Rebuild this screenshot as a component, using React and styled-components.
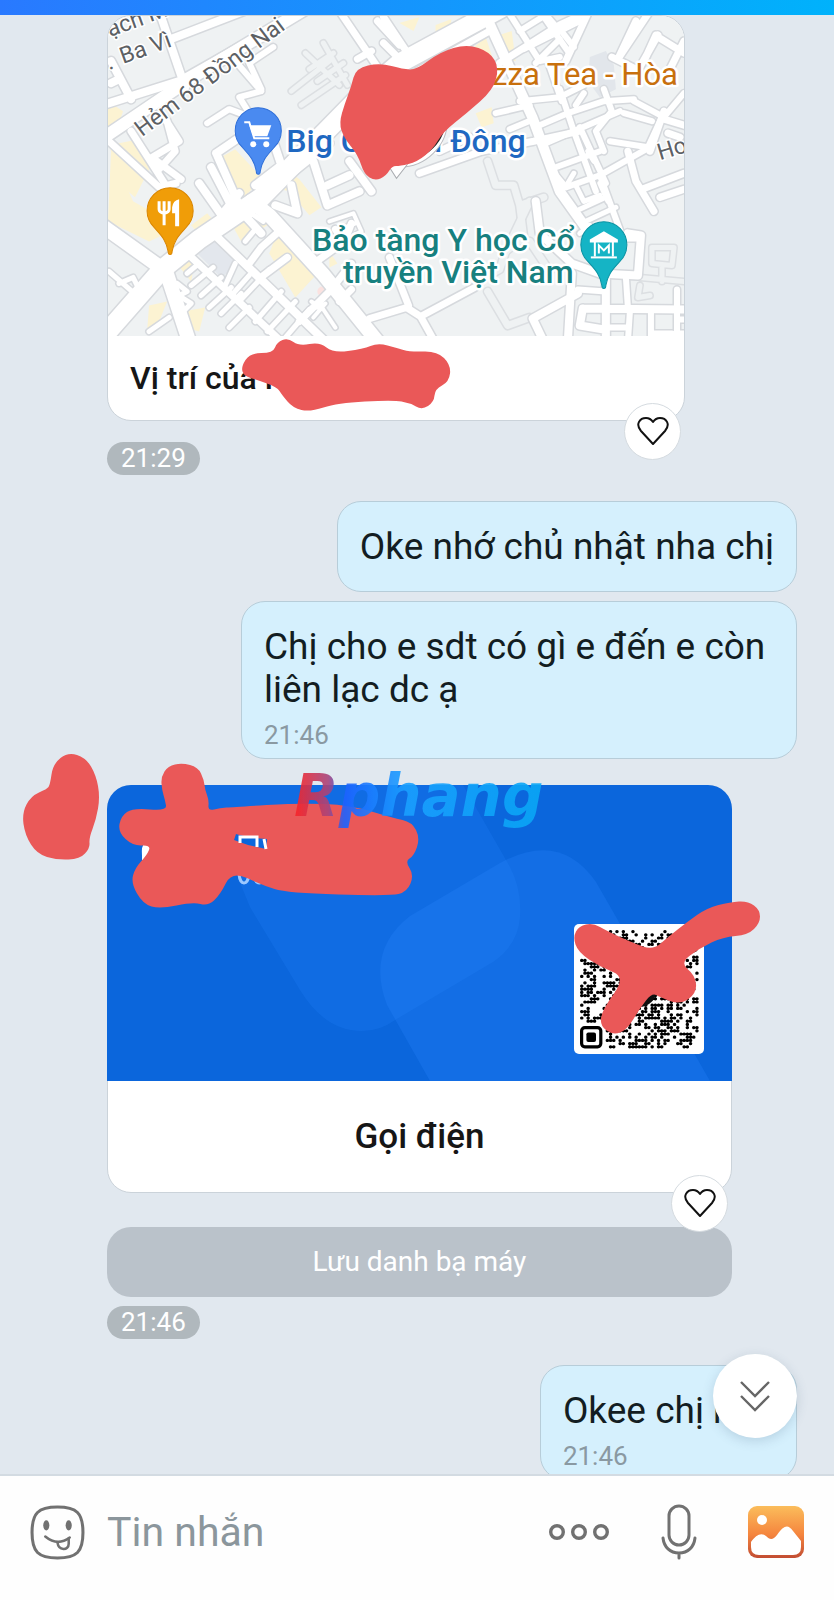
import React from 'react';
import styled, { createGlobalStyle } from 'styled-components';

// Closed blob through the midpoints of a list of points
const blob = (points) => {
  const p = points.split(' ').map((s) => s.split(',').map(Number));
  const mid = (a, b) => `${(a[0] + b[0]) / 2} ${(a[1] + b[1]) / 2}`;
  const start = mid(p[p.length - 1], p[0]);
  const curves = p.map((pt, i) => `Q${pt[0]} ${pt[1]} ${mid(pt, p[(i + 1) % p.length])}`);
  return `M${start} ${curves.join(' ')}Z`;
};

const Scribble = ({ points }) => <path d={blob(points)} fill="#ea5858" />;

const roads = [
  { w: 20, d: 'M100 340L163 268L200 238L262 196L356 100L400 62L500 8' },
  { w: 15, d: 'M100 222L167 270L190 340' },
  { w: 15, d: 'M252 200L270 214L323 272L378 340' },
  { w: 13, d: 'M104 137L200 72L306 8' },
  { w: 9, d: 'M104 104L180 80L300 12M160 10L186 86M250 8L172 38M112 60L132 98M120 78L112 82' },
  { w: 8, d: 'M110 140L160 186L177 182M132 130L168 186M150 158L180 140L166 118M168 120L176 150L160 168M158 160L182 178' },
  { w: 7, d: 'M236 60L262 90L240 96L250 112M262 88L250 62L274 46M208 122L230 108L246 114' },
  { w: 9, d: 'M217 152L258 124M217 152L240 204M200 182L224 216M212 166L234 208M256 184L282 164L274 140L262 148' },
  { w: 9, d: 'M262 196L330 142M314 160L328 204L360 190M328 184L350 174M350 160L372 190' },
  { w: 8, d: 'M340 10L378 66M378 20L400 44M384 16L408 52M358 58L372 50M384 42L404 62' },
  { w: 9, d: 'M210 228L326 340M238 206L262 232M222 214L240 192M276 204L298 212L292 184' },
  { w: 8, d: 'M186 250L282 340M250 262L262 246L282 228M264 274L288 256M300 320L332 288L352 262' },
  { w: 6, d: 'M232 222L252 212L264 220M246 240L256 228M262 210L274 222M188 272L200 262M192 284L214 266M202 294L222 276M210 306L232 286M222 312L242 292M230 326L250 306' },
  { w: 6, d: 'M226 284L236 262M234 292L250 274M256 320L282 290M268 330L296 300M286 336L310 308M240 300L270 268' },
  { w: 6, d: 'M176 292L192 302L184 310M176 296L188 290L178 282M150 330L170 316M110 270L140 296M120 282L134 276L140 288' },
  { w: 8, d: 'M320 258L345 240L352 222M345 240L336 228M340 300L352 288M370 317L407 306L421 315L475 286M390 256L409 304M421 315L435 340' },
  { w: 5, d: 'M312 300L324 308L336 326M314 316L326 302L318 306M330 220L354 212L362 230L344 240M336 230L356 222' },
  { w: 11, d: 'M484 10L533 117L560 190L590 232' },
  { w: 8, d: 'M420 172L482 150L534 140L580 130M440 150L470 136M400 80L490 30M500 62L560 24L590 10' },
  { w: 7, d: 'M508 10L540 60L560 56M520 30L546 14M540 10L568 50M524 48L580 20M536 62L560 38M548 16L560 30M560 28L574 46' },
  { w: 8, d: 'M590 8L566 60M620 55L650 10M612 56L640 70M636 20L618 58M658 34L640 66M656 34L646 56M658 36L684 52M684 40L668 72' },
  { w: 7, d: 'M520 100L560 96L584 84M496 112L530 104M540 124L568 112L604 100L634 98M546 142L620 110M556 166L600 150M510 128L534 118' },
  { w: 7, d: 'M560 88L574 130L596 190M548 60L562 100M584 92L576 104M604 88L612 110L596 130L604 150M580 126L606 182' },
  { w: 7, d: 'M566 186L600 174L650 146M600 174L622 234M556 174L566 186M634 100L664 116L684 92M624 112L652 120M610 140L648 146L660 120' },
  { w: 8, d: 'M628 150L636 180L654 210M642 188L684 172M660 196L684 188M664 110L650 150M664 118L684 124M668 132L680 136' },
  { w: 6, d: 'M576 184L584 200L600 194M580 208L606 196M586 220L616 206M600 182L608 200M594 160L588 150M568 182L574 172M590 224L580 232' },
  { w: 9, d: 'M536 200L540 232L572 262L600 272L638 274L641 234L628 232M610 236L638 236' },
  { w: 9, d: 'M606 270L606 340M572 272L568 340M533 317L578 292M533 317L544 340M583 307L684 308M583 307L580 324L604 328' },
  { w: 7, d: 'M578 288L606 290M626 276L628 306M630 310L628 340M651 310L651 340M677 288L677 340M677 318L690 318M677 332L690 332M608 326L628 326M652 332L672 332' },
];

// Footpaths: same colour as the ground, only their edges show
const lanes = [
  { w: 8, d: 'M488 160L496 184L514 184L520 204L544 196M520 204L524 236L506 250' },
  { w: 8, d: 'M488 290L508 324L530 316M478 280L500 268L506 250L530 200M530 240L550 270' },
  { w: 6, d: 'M292 90L330 60M302 104L346 74M306 52L340 84M324 42L348 84M310 68L334 52M318 80L344 62' },
  { w: 6, d: 'M652 246L674 246L672 264L652 262ZM662 264L662 280M640 276L684 280M640 284L638 296L650 294' },
];

const parks = [
  '109,100 124,110 118,128 109,132', '110,144 140,138 150,168 136,196 124,186', '112,150 134,200 180,226 150,240 109,220',
  '218,158 236,148 262,176 244,198', '330,116 350,100 348,118 322,134', '262,184 282,164 300,178 322,206 310,214 290,190',
  '232,222 262,204 274,220 256,232 242,240', '276,236 290,226 318,272 296,296 270,252', '192,224 208,212 222,228 204,238',
  '176,260 196,258 192,280', '184,310 206,306 200,330 186,326', '150,304 168,300 160,320 148,330',
  '408,54 430,34 438,46 424,66', '436,24 452,18 448,38 436,44', '470,50 486,36 494,60 486,80', '500,34 512,30 516,60 506,60',
  '476,112 492,106 494,122 482,126', '400,22 420,16 414,30', '330,250 338,262 330,266',
];

const Pin = ({ x, y, fill, edge, children }) => (
  <g transform={`translate(${x} ${y})`}>
    <path
      d="M0 43C-1 43-2 42-2 40C-4 28-10 23-16 16A23 23 0 1 1 16 16C10 23 4 28 2 40C2 42 1 43 0 43Z"
      fill={fill} stroke={edge} strokeWidth="1"
    />
    {children}
  </g>
);

const CityMap = () => (
  <MapSvg viewBox="109 15 575 319" role="img" aria-label="Bản đồ">
    <rect x="109" y="15" width="575" height="320" fill="#eff2f3" />
    <path d="M196 250L222 232L240 262L222 276Z" fill="#e3e7ed" />
    <path d="M590 56L606 50L614 64L616 88L600 96L588 80Z" fill="#e2e6eb" />
    {parks.map((p) => <polygon key={p} points={p} fill="#fcf3d2" />)}
    <circle cx="323" cy="290" r="5" fill="#fbe2e0" />
    <g fill="none" strokeLinecap="round" strokeLinejoin="round">
      {lanes.map(({ w, d }) => <path key={d} d={d} stroke="#dcdfe2" strokeWidth={w + 2} />)}
      {lanes.map(({ w, d }) => <path key={d} d={d} stroke="#eff2f3" strokeWidth={w - 1} />)}
      {roads.map(({ w, d }) => <path key={d} d={d} stroke="#d6d9dd" strokeWidth={w + 2} />)}
      {roads.map(({ w, d }) => <path key={d} d={d} stroke="#fff" strokeWidth={w - 1} />)}
    </g>
    <Street transform="translate(143 136) rotate(-37)">Hẻm 68 Đồng Nai</Street>
    <Street transform="translate(124 63) rotate(-20)">Ba Vì</Street>
    <Street transform="translate(111 36) rotate(-20)">ạch M</Street>
    <Street transform="translate(110 69) rotate(-19)">.</Street>
    <Street transform="translate(660 159) rotate(-17)">Ho</Street>
    <Place x="287" y="151" fill="#1f68c1">Big C</Place>
    <Place x="526" y="151" fill="#1f68c1" textAnchor="end">i Đông</Place>
    <Place x="678" y="84" fill="#c8700d" textAnchor="end" $light>zza Tea - Hòa</Place>
    <Place x="575" y="250" fill="#17807f" textAnchor="end">Bảo tàng Y học Cổ</Place>
    <Place x="574" y="282" fill="#17807f" textAnchor="end">truyền Việt Nam</Place>

    <circle cx="400" cy="118" r="48" fill="#fff" stroke="#b9bcc0" />
    <path d="M388 163L397 177L408 163" fill="#fff" stroke="#a9acb0" />
    <circle cx="402" cy="115" r="45" fill="#222" />

    <Pin x={259} y={130} fill="#4a8af0" edge="#2f6fd8">
      <path d="M-14 -9H-9L-4 7H11" fill="none" stroke="#fff" strokeWidth="2" />
      <path d="M-9 -6H13L9 5H-5Z" fill="#fff" />
      <circle cx="-5" cy="13" r="3" fill="#fff" />
      <circle cx="8" cy="13" r="3" fill="#fff" />
    </Pin>
    <Pin x={171} y={210} fill="#f09d08" edge="#d98500">
      <path d="M-11 -10V-2Q-11 1 -6 2Q-1 1 -1 -2V-10M-6 -10V14" fill="none" stroke="#fff" strokeWidth="3" />
      <path d="M9 -12V15H5V2H2V-4Q3 -11 9 -12Z" fill="#fff" />
    </Pin>
    <Pin x={604} y={244} fill="#15b4c5" edge="#0b93a3">
      <path d="M-14 -6L0 -14L14 -6V-3H-14Z" fill="#fff" />
      <path d="M-9 -4V11M9 -4V11" stroke="#fff" strokeWidth="2" />
      <path d="M-13 12H13" stroke="#fff" strokeWidth="2" />
      <path d="M-5 8V0L0 5L5 0V8" fill="none" stroke="#fff" strokeWidth="2" />
    </Pin>
  </MapSvg>
);

// Dots of the contact code, from a small seeded generator
const QR_SIZE = 37;
const qrDots = () => {
  let seed = 20;
  let d = '';
  for (let y = 0; y < QR_SIZE; y += 1) {
    for (let x = 0; x < QR_SIZE; x += 1) {
      seed = (seed * 16807) % 2147483647;
      const finder = (x < 8 && (y < 8 || y > 28)) || (x > 28 && y < 8);
      if (!finder && seed % 100 < 44) d += `M${x + 0.5} ${y + 0.5}h0.1`;
    }
  }
  return d;
};

const QrCode = () => (
  <g transform="translate(574 924)">
    <rect width="130" height="130" rx="5" fill="#fff" />
    <g transform="translate(6 6) scale(3.2)">
      <path d={qrDots()} stroke="#000" strokeWidth="1" strokeLinecap="round" />
      {[[0, 0], [30, 0], [0, 30]].map(([x, y]) => (
        <g key={`${x}-${y}`} transform={`translate(${x} ${y})`}>
          <rect x="0.5" y="0.5" width="6" height="6" rx="1" fill="none" stroke="#000" />
          <rect x="2" y="2" width="3" height="3" rx="0.6" />
        </g>
      ))}
    </g>
    <circle cx="65" cy="65" r="18" fill="#111" />
  </g>
);

const HeartIcon = () => (
  <svg width="32" height="30" viewBox="0 0 32 30" fill="none" stroke="#111" strokeWidth="2" strokeLinejoin="round">
    <path d="M16 28L4 15C-2 8 3 2 9 2C12 2 14 3 16 6C18 3 20 2 23 2C29 2 34 8 28 15Z" />
  </svg>
);

const StickerIcon = () => (
  <svg width="55" height="55" viewBox="0 0 54 54" fill="none" stroke="#717171" strokeWidth="3">
    <path d="M27 2C46 2 52 8 52 27C52 46 46 52 27 52C8 52 2 46 2 27C2 8 8 2 27 2Z" />
    <ellipse cx="16" cy="20" rx="3" ry="5" fill="#717171" stroke="none" />
    <ellipse cx="38" cy="20" rx="3" ry="5" fill="#717171" stroke="none" />
    <path d="M15 31Q27 41 39 32" strokeLinecap="round" strokeWidth="2.5" />
    <path d="M27 37C28 45 38 45 38 38V33" strokeLinecap="round" strokeWidth="2.5" />
  </svg>
);

const MicIcon = () => (
  <svg width="38" height="56" viewBox="0 0 38 56" fill="none" stroke="#717171" strokeWidth="3" strokeLinecap="round">
    <rect x="9" y="2" width="20" height="39" rx="10" />
    <path d="M3 34C4 43 10 49 19 49C28 49 34 43 35 34M19 49V54" />
  </svg>
);

const DotsIcon = () => (
  <svg width="62" height="18" viewBox="0 0 62 18" fill="none" stroke="#717171" strokeWidth="3.4">
    <circle cx="9" cy="9" r="6.3" />
    <circle cx="31" cy="9" r="6.3" />
    <circle cx="53" cy="9" r="6.3" />
  </svg>
);

const PhotoIcon = () => (
  <svg width="56" height="52" viewBox="0 0 56 52">
    <defs>
      <linearGradient id="photo" x1="0" y1="0" x2="0" y2="1">
        <stop offset="0" stopColor="#fbbd5b" />
        <stop offset="0.55" stopColor="#f5853e" />
        <stop offset="1" stopColor="#c24d33" />
      </linearGradient>
    </defs>
    <rect width="56" height="52" rx="9" fill="url(#photo)" />
    <circle cx="14" cy="14" r="5" fill="#fff" />
    <path d="M3 36C8 29 13 26 18 30C22 34 25 34 29 29C36 19 40 18 45 25L53 35V41Q53 49 45 49H11Q3 49 3 41Z" fill="#fff" />
  </svg>
);

const Liked = () => <HeartButton aria-label="Thích"><HeartIcon /></HeartButton>;

const App = () => (
  <Screen>
    <GlobalStyle />
    <StatusStrip />
    <Messages>
      <LocationCard>
        <CityMap />
        <CardLabel>Vị trí của l</CardLabel>
        <Marks viewBox="107 15 578 406">
          <Scribble points="356,68 380,63 403,69 416,70 440,52 467,44 490,52 499,68 493,90 467,113 443,132 433,149 417,162 400,166 392,166 386,176 375,181 364,174 358,155 344,138 339,123 345,103 351,87" />
          <Scribble points="241,367 250,353 273,353 277,342 288,338 299,346 320,342 333,353 363,349 378,343 397,348 410,352 437,351 451,365 449,382 435,389 434,402 422,410 410,403 393,400 337,403 310,412 293,408 282,395 277,387 257,380 244,376" />
        </Marks>
        <Liked />
      </LocationCard>
      <TimePill>21:29</TimePill>

      <Bubble>Oke nhớ chủ nhật nha chị</Bubble>
      <Bubble $follow $timed>
        Chị cho e sdt có gì e đến e còn liên lạc dc ạ
        <BubbleTime>21:46</BubbleTime>
      </Bubble>

      <ContactCard>
        <ContactArt viewBox="107 785 625 296" aria-hidden="true">
          <rect x="107" y="785" width="625" height="296" fill="#0b66dc" />
          <path d="M200 785L250 907L300 990Q325 1031 362 1031Q380 1031 395 1020L493 962Q518 945 520 917Q522 890 510 867L463 785Z" fill="#2a86ff" opacity="0.2" />
          <path d="M430 1081L387 1005Q366 950 410 916L500 863Q560 830 596 882L710 1081Z" fill="#2a86ff" opacity="0.25" />
          <path d="M142 856Q141 846 145 842H150V860H142Z" fill="#fff" />
          <path d="M239 874C240 886 248 886 249 874M254 874C255 886 264 886 265 874" fill="none" stroke="#9cc8ff" strokeWidth="3" />
          <QrCode />
        </ContactArt>
        <CallButton>Gọi điện</CallButton>
        <Marks viewBox="107 785 625 408">
          <Scribble points="50,785 53,764 68,752 86,758 96,775 100,797 96,820 89,838 90,848 80,859 57,860 37,854 25,835 22,813 31,796 47,789" />
          <Scribble points="161,777 168,766 182,763 198,767 204,780 205,790 209,800 208,811 220,808 233,807 300,803 350,805 393,818 412,822 420,838 414,856 405,861 414,875 407,892 390,896 287,893 262,885 232,871 220,895 208,906 193,902 160,909 143,904 131,883 135,868 147,855 151,845 133,846 118,832 121,816 133,808 167,811 165,800 162,790" />
          <path d="M234 840L236 834Q244 837 267 839L266 849L248 845Z" fill="#0b66dc" />
          <path d="M240 843V837H257V847M264 839L266 849" fill="none" stroke="#fff" strokeWidth="3" />
          <Scribble points="573,937 579,926 593,923 607,931 633,943 653,950 667,938 687,922 707,908 730,902 748,901 760,910 760,923 748,935 723,937 700,948 680,963 695,975 697,993 680,1005 660,997 652,993 640,1008 627,1030 613,1035 600,1026 602,1010 626,977 600,967 578,952" />
        </Marks>
        <Watermark>Rphang</Watermark>
        <Liked />
      </ContactCard>
      <SaveButton>Lưu danh bạ máy</SaveButton>
      <TimePill $tight>21:46</TimePill>

      <Bubble $timed>
        Okee chị nha
        <BubbleTime>21:46</BubbleTime>
      </Bubble>
      <ScrollDown aria-label="Xuống cuối">
        <svg width="30" height="32" viewBox="0 0 30 32" fill="none" stroke="#666" strokeWidth="2.4">
          <path d="M1 2L15 16L29 2M1 16L15 30L29 16" />
        </svg>
      </ScrollDown>
    </Messages>

    <Composer>
      <IconButton aria-label="Nhãn dán"><StickerIcon /></IconButton>
      <MessageInput type="text" aria-label="Tin nhắn" placeholder="Tin nhắn" />
      <Actions>
        <IconButton aria-label="Thêm"><DotsIcon /></IconButton>
        <IconButton aria-label="Ghi âm"><MicIcon /></IconButton>
        <IconButton aria-label="Ảnh"><PhotoIcon /></IconButton>
      </Actions>
    </Composer>
  </Screen>
);

export default App;

// Styled Components
const GlobalStyle = createGlobalStyle`
  * {
    box-sizing: border-box;
  }

  body {
    margin: 0;
    font-family: Roboto, "Noto Sans", sans-serif;
    background: #e1e8ef;
  }

  button, input {
    font-family: inherit;
    border: 0;
    padding: 0;
    background: none;
  }

  svg {
    display: block;
  }
`;

const Screen = styled.div`
  display: flex;
  flex-direction: column;
  height: 100vh;
`;

const StatusStrip = styled.header`
  flex: none;
  height: 15px;
  background: linear-gradient(90deg, #2979ff, #00b2fb);
`;

const Messages = styled.main`
  position: relative;
  display: flex;
  flex: 1;
  flex-direction: column;
  align-items: flex-start;
  min-height: 0;
  padding: 0 37px 0 107px;
  overflow: hidden;
  background: #e1e8ef;
`;

const Card = styled.section`
  position: relative;
  flex: none;
  width: 100%;
  border: 1px solid #cbd3da;
  border-radius: 24px;
  background: #fff;
`;

const LocationCard = styled(Card)`
  max-width: 578px;
`;

const MapSvg = styled.svg`
  width: 100%;
  border-radius: 23px 23px 0 0;
`;

const Street = styled.text`
  font-size: 23px;
  font-weight: 400;
  fill: #5c6064;
  stroke: #fff;
  stroke-width: 3px;
  paint-order: stroke;
`;

const Place = styled.text`
  font-size: ${({ $light }) => ($light ? '31px' : '32px')};
  font-weight: ${({ $light }) => ($light ? 400 : 500)};
  stroke: #fff;
  stroke-width: 5px;
  stroke-linejoin: round;
  paint-order: stroke;
`;

const CardLabel = styled.h2`
  margin: 0;
  padding: 23px 22px;
  font-size: 32px;
  font-weight: 500;
  line-height: 38px;
  color: #161616;
`;

const Marks = styled.svg`
  position: absolute;
  top: -1px;
  left: -1px;
  width: calc(100% + 2px);
  overflow: visible;
  pointer-events: none;
`;

const HeartButton = styled.button`
  position: absolute;
  right: 3px;
  bottom: -40px;
  display: grid;
  place-items: center;
  width: 57px;
  height: 57px;
  border: 1px solid #d5dbe0;
  border-radius: 50%;
  background: #fff;
`;

const TimePill = styled.time`
  flex: none;
  margin-top: ${({ $tight }) => ($tight ? '9px' : '21px')};
  padding: 0 14px;
  border-radius: 17px;
  font-size: 26px;
  line-height: 33px;
  color: #fff;
  background: #b0b8bd;
`;

const Bubble = styled.div`
  flex: none;
  align-self: flex-end;
  max-width: 556px;
  margin-top: ${({ $follow }) => ($follow ? '9px' : '26px')};
  padding: 23px 22px ${({ $timed }) => ($timed ? '7px' : '23px')};
  border: 1px solid #b7cdd9;
  border-radius: 24px;
  font-size: 37px;
  line-height: 43px;
  color: #131d22;
  background: #d5f0fd;
`;

const BubbleTime = styled.time`
  display: block;
  margin-top: 8px;
  font-size: 26px;
  line-height: 32px;
  color: #8a99a2;
`;

const ContactCard = styled(Card)`
  max-width: 625px;
  margin-top: 26px;
`;

const ContactArt = styled.svg`
  width: calc(100% + 2px);
  margin: -1px -1px 0;
  border-radius: 24px 24px 0 0;
`;

const CallButton = styled.button`
  display: block;
  width: 100%;
  font-size: 35px;
  font-weight: 500;
  line-height: 111px;
  color: #161616;
`;

const Watermark = styled.span`
  position: absolute;
  top: -25px;
  left: 178px;
  padding: 0 8px;
  font-family: "DejaVu Sans", sans-serif;
  font-size: 58px;
  font-style: italic;
  font-weight: 700;
  line-height: 70px;
  color: transparent;
  background: linear-gradient(90deg, #f5262c 4%, #a8457c 16%, #1d62ff 22%, #1aa0ff 45%, #08a8f5);
  background-clip: text;
  opacity: 0.9;
`;

const SaveButton = styled.button`
  flex: none;
  width: 100%;
  max-width: 625px;
  margin-top: 34px;
  border-radius: 24px;
  font-size: 28px;
  line-height: 70px;
  color: #fff;
  background: #bac2ca;
`;

const ScrollDown = styled.button`
  position: absolute;
  right: 37px;
  bottom: 36px;
  display: grid;
  place-items: center;
  width: 84px;
  height: 84px;
  border-radius: 50%;
  background: #fff;
  box-shadow: 0 3px 12px rgba(60, 90, 120, 0.2);
`;

const Composer = styled.footer`
  display: flex;
  flex: none;
  align-items: center;
  gap: 22px;
  padding: 28px 30px 40px;
  border-top: 2px solid #d3dbe2;
  background: #fefefe;
`;

const IconButton = styled.button`
  flex: none;
`;

const MessageInput = styled.input`
  flex: 1;
  min-width: 0;
  height: 56px;
  font-size: 41px;
  outline: none;

  &::placeholder {
    color: #8b969c;
    opacity: 1;
  }
`;

const Actions = styled.div`
  display: flex;
  align-items: center;
  gap: 50px;
`;
